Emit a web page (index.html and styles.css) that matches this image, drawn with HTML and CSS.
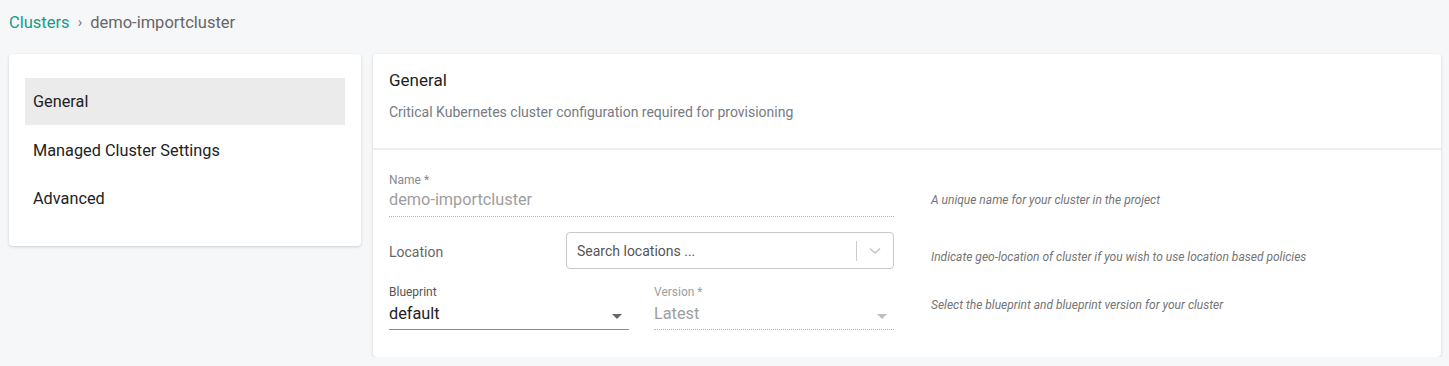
FILE: index.html
```html
<!DOCTYPE html>
<html lang="en">
<head>
  <meta charset="UTF-8" />
  <meta name="viewport" content="width=device-width, initial-scale=1.0"/>
  <title>demo-importcluster - Clusters</title>
  <link rel="stylesheet" href="styles.css">
</head>
<body>
  <nav class="breadcrumb">
    <a href="#">Clusters</a>
    <span class="sep">›</span>
    <span class="current">demo-importcluster</span>
  </nav>

  <div class="layout">
    <aside class="card menu">
      <div class="menu-item active">General</div>
      <div class="menu-item">Managed Cluster Settings</div>
      <div class="menu-item">Advanced</div>
    </aside>

    <section class="card panel">
      <div class="panel-head">
        <h2>General</h2>
        <p>Critical Kubernetes cluster configuration required for provisioning</p>
      </div>

      <div class="form">
        <div class="row row-name">
          <div class="field disabled">
            <label>Name *</label>
            <div class="value">demo-importcluster</div>
          </div>
          <div class="help">A unique name for your cluster in the project</div>
        </div>

        <div class="row row-location">
          <div class="location">
            <span class="loc-label">Location</span>
            <div class="search-box">
              <span class="placeholder">Search locations ...</span>
              <span class="divider"></span>
              <svg class="chevron" width="12" height="8" viewBox="0 0 12 8">
                <path d="M1 1.5 L6 6 L11 1.5" fill="none" stroke="#c6c6c6" stroke-width="1.6"/>
              </svg>
            </div>
          </div>
          <div class="help">Indicate geo-location of cluster if you wish to use location based policies</div>
        </div>

        <div class="row row-blueprint">
          <div class="pair">
            <div class="field select">
              <label>Blueprint</label>
              <div class="value">default<span class="caret"></span></div>
            </div>
            <div class="field select disabled">
              <label>Version *</label>
              <div class="value">Latest<span class="caret"></span></div>
            </div>
          </div>
          <div class="help">Select the blueprint and blueprint version for your cluster</div>
        </div>
      </div>
    </section>
  </div>
</body>
</html>
```

FILE: styles.css
```css
body {
  margin: 0;
  padding: 0 8px 0 9px;
  background: #f6f7f9;
  font-family: Roboto, "Liberation Sans", Arial, sans-serif;
  color: #222;
}
.breadcrumb {
  height: 44px;
  display: flex;
  align-items: center;
  gap: 8px;
  font-size: 16.5px;
}
.breadcrumb a {
  color: #149c89;
  text-decoration: none;
}
.breadcrumb .sep {
  color: #777;
  font-size: 15px;
}
.breadcrumb .current {
  color: #666;
}
.layout {
  display: grid;
  grid-template-columns: 352px 1fr;
  column-gap: 12px;
  align-items: start;
  margin-top: 10px;
}
.card {
  background: white;
  border-radius: 4px;
  box-shadow: 0 1px 3px rgba(0,0,0,0.16);
}
.menu {
  padding: 24px 16px;
}
.menu-item {
  height: 48px;
  display: flex;
  align-items: center;
  padding-left: 8px;
  font-size: 16.3px;
  color: #222;
}
.menu-item.active {
  background: #ebebeb;
  height: 47px;
  margin-bottom: 1px;
}
.panel-head {
  padding: 16px 16px 0;
  height: 78px;
  border-bottom: 2px solid #eeeeee;
}
.panel-head h2 {
  margin: 0;
  font-size: 17px;
  font-weight: 400;
  line-height: 20px;
  color: #222;
}
.panel-head p {
  margin: 12px 0 0;
  font-size: 14px;
  line-height: 20px;
  color: #767b84;
}
.form {
  padding: 22px 16px 27px;
}
.row {
  display: grid;
  grid-template-columns: 505px 1fr;
  column-gap: 37px;
  align-items: center;
}
.row-location {
  margin-top: 15px;
}
.row-blueprint {
  margin-top: 15px;
}
.help {
  font-size: 12px;
  font-style: italic;
  color: #757575;
}
.row-name .help {
  padding-top: 10px;
}
.row-location .help {
  padding-top: 12px;
}
.row-blueprint .help {
  padding-bottom: 4px;
}
.field label {
  display: block;
  font-size: 12px;
  line-height: 16px;
  color: #555;
}
.field .value {
  position: relative;
  font-size: 16.3px;
  line-height: 24px;
  padding-bottom: 4px;
  border-bottom: 1px solid #8a8a8a;
  color: #222;
}
.select .value {
  padding-top: 2px;
  padding-bottom: 3px;
}
.field.disabled label,
.field.disabled .value {
  color: #9e9e9e;
}
.field.disabled .value {
  border-bottom: 1px dotted #b5b5b5;
}
.row-name .field.disabled label {
  color: #8a8a8a;
}
.pair {
  display: grid;
  grid-template-columns: 1fr 1fr;
  column-gap: 25px;
}
.caret {
  position: absolute;
  right: 7px;
  top: 14px;
  border-left: 5px solid transparent;
  border-right: 5px solid transparent;
  border-top: 5px solid #666;
}
.disabled .caret {
  border-top-color: #bdbdbd;
}
.location {
  display: grid;
  grid-template-columns: 177px 1fr;
  align-items: center;
}
.loc-label {
  font-size: 14px;
  color: #666;
  padding-top: 2px;
}
.search-box {
  height: 35px;
  border: 1px solid #c8c8c8;
  border-radius: 4px;
  display: flex;
  align-items: center;
  padding-left: 10px;
}
.placeholder {
  flex: 1;
  font-size: 14px;
  color: #555;
}
.divider {
  width: 1px;
  height: 20px;
  background: #cccccc;
}
.chevron {
  margin: 0 12px 0 12px;
}
```
